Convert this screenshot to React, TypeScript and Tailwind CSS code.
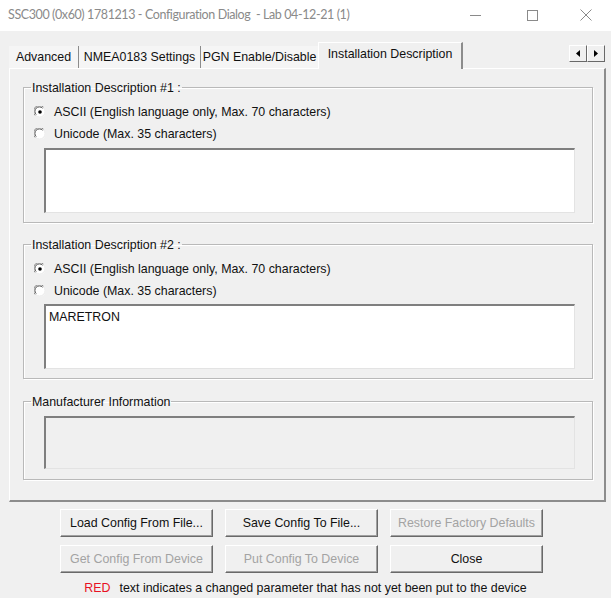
import React from "react";

const font = { fontFamily: '"Liberation Sans", Arial, sans-serif' };

function Radio({ checked }: { checked?: boolean }) {
  return (
    <svg width="12" height="12" viewBox="0 0 12 12" className="shrink-0">
      <circle cx="6" cy="6" r="5.5" fill="#ffffff" />
      <path d="M1.2 9.5 A5.3 5.3 0 0 1 9.5 1.2" fill="none" stroke="#8a8a8a" strokeWidth="1" />
      <path d="M2.2 8.6 A4.3 4.3 0 0 1 8.6 2.2" fill="none" stroke="#505050" strokeWidth="1" />
      <path d="M9.5 1.8 A5.3 5.3 0 0 1 1.8 9.5" fill="none" stroke="#e8e8e8" strokeWidth="1" />
      {checked && <circle cx="6" cy="6" r="1.8" fill="#000000" />}
    </svg>
  );
}

function RadioRow({ checked, label }: { checked?: boolean; label: string }) {
  return (
    <div className="flex h-[22px] items-center pl-[10px]">
      <Radio checked={checked} />
      <span className="ml-[8px] text-[12.4px] text-[#111]">{label}</span>
    </div>
  );
}

function TextBox({ value, disabled, h }: { value?: string; disabled?: boolean; h: string }) {
  return (
    <div
      className={`ml-[20px] mr-[17px] border-t-2 border-l-2 border-t-[#7f7f7f] border-l-[#7f7f7f] border-r border-b border-r-[#e3e3e3] border-b-[#e3e3e3] ${h} ${
        disabled ? "bg-[#f0f0f0]" : "bg-white"
      }`}
    >
      {value && <div className="px-[3px] pt-[2px] text-[12.4px] text-[#111]">{value}</div>}
    </div>
  );
}

function Group({ title, children, className }: { title: string; children: React.ReactNode; className?: string }) {
  return (
    <fieldset
      className={`ml-[13px] mr-[11px] border border-[#b9b9b9] shadow-[inset_1px_1px_0_#ffffff,1px_1px_0_#ffffff] ${className ?? ""}`}
    >
      <legend className="ml-[7px] px-[1px] text-[12.4px] leading-[14px] text-[#111]">{title}</legend>
      {children}
    </fieldset>
  );
}

function Btn({ label, disabled }: { label: string; disabled?: boolean }) {
  return (
    <button
      className={`h-[28px] w-[153px] border-t border-l border-white border-r border-b border-r-[#696969] border-b-[#696969] bg-[#f0f0f0] shadow-[inset_-1px_-1px_0_#a0a0a0] text-[12.4px] ${
        disabled ? "text-[#a3a3a3]" : "text-[#111]"
      }`}
    >
      {label}
    </button>
  );
}

export default function App() {
  return (
    <div style={font} className="w-[611px] h-[598px] overflow-hidden bg-[#f0f0f0] flex flex-col">
      {/* title bar */}
      <div className="h-[31px] bg-white flex items-center">
        <span
          style={{ fontFamily: "Lato, sans-serif" }}
          className="pl-[8px] text-[12.5px] tracking-[-0.4px] text-[#8a8a8a] whitespace-pre"
        >
          SSC300 (0x60) 1781213 - Configuration Dialog  - Lab 04-12-21 (1)
        </span>
        <div className="ml-auto flex h-full">
          <div className="w-[57px] flex items-center justify-center">
            <div className="w-[11px] h-px bg-[#8a8a8a]" />
          </div>
          <div className="w-[57px] flex items-center justify-center">
            <div className="w-[11px] h-[11px] border border-[#8a8a8a]" />
          </div>
          <div className="w-[50px] flex items-center justify-center">
            <svg width="12" height="12" viewBox="0 0 12 12">
              <path d="M0.5 0.5 L11.5 11.5 M11.5 0.5 L0.5 11.5" stroke="#8a8a8a" strokeWidth="1" />
            </svg>
          </div>
        </div>
      </div>

      {/* tabs */}
      <div className="mt-[11px] flex items-end pl-[9px] pr-[6px] h-[26px]">
        <div className="h-[22px] w-[70px] flex items-center justify-center text-[12.4px] text-[#111] bg-[#f5f5f5] border-r border-r-[#8c8c8c]">
          Advanced
        </div>
        <div className="h-[22px] w-[122px] flex items-center justify-center text-[12.4px] text-[#111] bg-[#f5f5f5] border-r border-r-[#8c8c8c]">
          NMEA0183 Settings
        </div>
        <div className="h-[22px] w-[117px] flex items-center justify-center text-[12.4px] text-[#111] bg-[#f5f5f5]">
          PGN Enable/Disable
        </div>
        <div className="relative z-10 -mb-px h-[27px] w-[145px] flex items-center justify-center pb-[3px] text-[12.4px] text-[#111] bg-[#f0f0f0] border-t border-l border-white border-r-2 border-r-[#8c8c8c]">
          Installation Description
        </div>
        <div className="ml-auto mb-[6px] flex">
          <div className="w-[18px] h-[17px] flex items-center justify-center border-t border-l border-white border-r border-b border-r-[#696969] border-b-[#696969] bg-[#f0f0f0]">
            <svg width="4" height="7" viewBox="0 0 4 7">
              <path d="M4 0 L0 3.5 L4 7 Z" fill="#000" />
            </svg>
          </div>
          <div className="w-[18px] h-[17px] flex items-center justify-center border-t border-l border-white border-r border-b border-r-[#696969] border-b-[#696969] bg-[#f0f0f0]">
            <svg width="4" height="7" viewBox="0 0 4 7">
              <path d="M0 0 L4 3.5 L0 7 Z" fill="#000" />
            </svg>
          </div>
        </div>
      </div>

      {/* tab panel */}
      <div className="ml-[9px] w-[597px] h-[436px] border-t border-l border-white border-r-2 border-b-2 border-r-[#8c8c8c] border-b-[#8c8c8c] pt-[12px]">
        <Group title="Installation Description #1 :">
          <div className="mt-[6px]">
            <RadioRow checked label="ASCII (English language only, Max. 70 characters)" />
            <RadioRow label="Unicode (Max. 35 characters)" />
          </div>
          <div className="mt-[3px] mb-[9px]">
            <TextBox h="h-[65px]" />
          </div>
        </Group>
        <Group title="Installation Description #2 :" className="mt-[15px]">
          <div className="mt-[6px]">
            <RadioRow checked label="ASCII (English language only, Max. 70 characters)" />
            <RadioRow label="Unicode (Max. 35 characters)" />
          </div>
          <div className="mt-[2px] mb-[9px]">
            <TextBox h="h-[65px]" value="MARETRON" />
          </div>
        </Group>
        <Group title="Manufacturer Information" className="mt-[16px]">
          <div className="mt-[7px] mb-[10px]">
            <TextBox h="h-[53px]" disabled />
          </div>
        </Group>
      </div>

      {/* buttons */}
      <div className="mt-[7px] ml-[60px] grid grid-cols-[153px_153px_153px] gap-x-[12px] gap-y-[8px]">
        <Btn label="Load Config From File..." />
        <Btn label="Save Config To File..." />
        <Btn label="Restore Factory Defaults" disabled />
        <Btn label="Get Config From Device" disabled />
        <Btn label="Put Config To Device" disabled />
        <Btn label="Close" />
      </div>

      <div className="mt-[6px] text-center text-[12.4px] text-[#111]">
        <span className="text-[#e81123]">RED</span>
        <span className="ml-[9px]">text indicates a changed parameter that has not yet been put to the device</span>
      </div>
    </div>
  );
}
